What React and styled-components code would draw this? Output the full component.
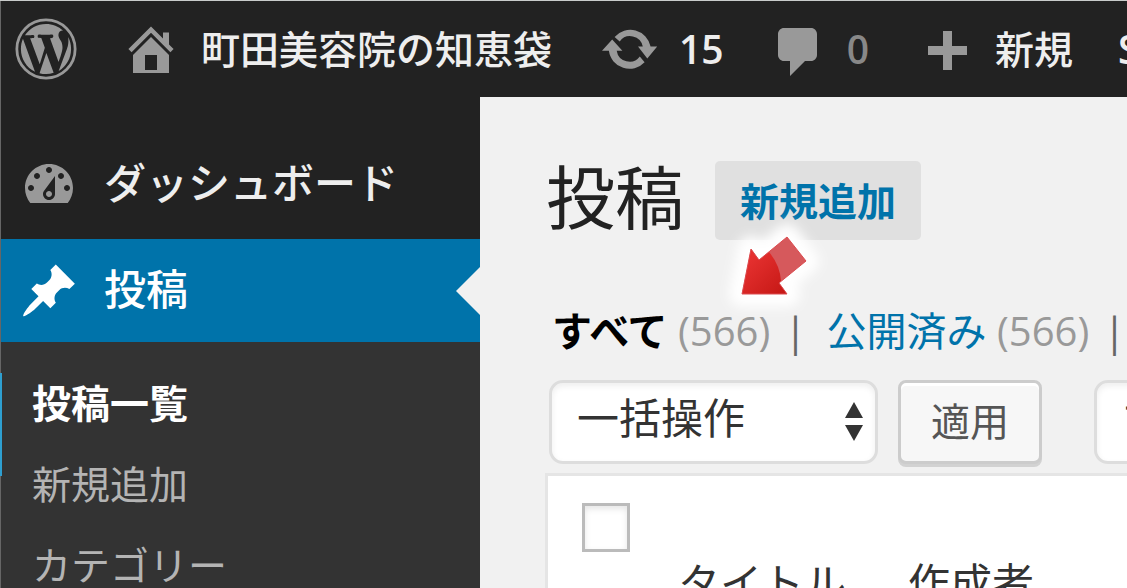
import React, { useState } from "react";
import styled, { createGlobalStyle } from "styled-components";

const colors = {
  bar: "#222222",
  submenu: "#333333",
  blue: "#0073aa",
  page: "#f1f1f1",
  icon: "#999999",
  light: "#eeeeee",
};

const paths = {
  home: "M16 8.5l1.53 1.53-1.06 1.06L10 4.6l-6.47 6.49-1.06-1.06L10 2.5l4 4v-2h2v4zm-6-2.46l6 5.99V18H4v-5.97zM12 17v-5H8v5h4z",
  update:
    "M5.2 6A6.9 6.9 0 0 1 17.2 9.2H19.4L16.1 13.2L13 9.2H14.6A4.3 4.3 0 0 0 6.9 7.5ZM15.2 14.4A6.9 6.9 0 0 1 3.3 10.6H1L4.4 6.8L7.8 10.6H5.9A4.3 4.3 0 0 0 13.6 12.5Z",
  comment:
    "M5 3h9c1.1 0 2 .9 2 2v7c0 1.1-.9 2-2 2h-2l-5 5v-5H5c-1.1 0-2-.9-2-2V5c0-1.1.9-2 2-2z",
  plus: "M17 9v3h-5v5H9v-5H4V9h5V4h3v5h5z",
  dashboard:
    "M3.76 16h12.48c1.1-1.37 1.76-3.11 1.76-5 0-4.42-3.58-8-8-8s-8 3.58-8 8c0 1.89.66 3.63 1.76 5zM10 4c.55 0 1 .45 1 1s-.45 1-1 1-1-.45-1-1 .45-1 1-1zM6 6c.55 0 1 .45 1 1s-.45 1-1 1-1-.45-1-1 .45-1 1-1zm8 0c.55 0 1 .45 1 1s-.45 1-1 1-1-.45-1-1 .45-1 1-1zm-5.37 5.55L12 7v6c0 1.1-.9 2-2 2s-2-.9-2-2c0-.57.24-1.08.63-1.45zM4 10c.55 0 1 .45 1 1s-.45 1-1 1-1-.45-1-1 .45-1 1-1zm12 0c.55 0 1 .45 1 1s-.45 1-1 1-1-.45-1-1 .45-1 1-1zm-5 3c0-.55-.45-1-1-1s-1 .45-1 1 .45 1 1 1 1-.45 1-1z",
  pin: "M10.44 3.02l1.82-1.82 6.36 6.35-1.83 1.82c-1.05-.68-2.48-.57-3.41.36l-.75.75c-.92.93-1.04 2.35-.35 3.41l-1.83 1.82-2.41-2.41-2.8 2.79c-.42.42-3.38 2.71-3.8 2.29s1.86-3.39 2.28-3.81l2.79-2.79L4.1 9.36l1.83-1.82c1.05.69 2.48.57 3.4-.36l.75-.75c.93-.92 1.05-2.35.36-3.41z",
  wordpress:
    "M7.78 15.37L4.37 6.22c.55-.02 1.17-.08 1.17-.08.5-.06.44-1.13-.06-1.11 0 0-1.45.11-2.37.11-.18 0-.37 0-.58-.01C4.12 2.69 6.87 1.11 10 1.11c2.33 0 4.45.87 6.05 2.34-.68-.11-1.65.39-1.65 1.58 0 .74.45 1.36.9 2.1.35.61.55 1.36.55 2.46 0 1.49-1.4 5-1.4 5l-3.03-8.37c.54-.02.82-.17.82-.17.5-.05.44-1.25-.06-1.22 0 0-1.44.12-2.38.12-.87 0-2.33-.12-2.33-.12-.5-.03-.56 1.2-.06 1.22l.92.08 1.26 3.41zM17.41 10c.24-.64.74-1.87.43-4.25.7 1.29 1.05 2.71 1.05 4.25 0 3.29-1.73 6.24-4.4 7.78.97-2.59 1.94-5.2 2.92-7.78zM6.1 18.09C3.12 16.65 1.11 13.53 1.11 10c0-1.3.23-2.48.72-3.59C3.25 10.3 4.67 14.2 6.1 18.09zM10.13 11.46l2.58 6.98c-.86.29-1.76.45-2.71.45-.79 0-1.57-.11-2.29-.33.81-2.38 1.62-4.74 2.42-7.1z",
};

function Icon({ name }) {
  return (
    <IconSvg viewBox="0 0 20 20" aria-hidden="true">
      <path fillRule="evenodd" d={paths[name]} />
    </IconSvg>
  );
}

function Logo() {
  return (
    <LogoSvg viewBox="0 0 20 20" aria-hidden="true">
      <circle cx="10" cy="10" r="9.4" fill="none" stroke="currentColor" strokeWidth="0.9" />
      <path transform="translate(10 10) scale(0.91) translate(-10 -10)" d={paths.wordpress} />
    </LogoSvg>
  );
}

function Picker({ label, options }) {
  return (
    <PickerBox>
      <Select aria-label={label}>
        {options.map((option) => (
          <option key={option}>{option}</option>
        ))}
      </Select>
      <PickerArrows viewBox="0 0 18 40" aria-hidden="true">
        <path d="M9 0l9 16H0zM0 23h18L9 39z" />
      </PickerArrows>
    </PickerBox>
  );
}

export default function App() {
  const [checked, setChecked] = useState(false);

  return (
    <Frame>
      <GlobalStyle />
      <AdminBar>
        <BarLink href="#wordpress" aria-label="WordPress">
          <Logo />
        </BarLink>
        <BarLink href="#site" $left={44}>
          <Icon name="home" />
          <BarText $left={20}>町田美容院の知恵袋</BarText>
        </BarLink>
        <BarLink href="#updates" $left={47}>
          <Icon name="update" />
          <BarText $left={20} $number>
            15
          </BarText>
        </BarLink>
        <BarLink href="#comments" $left={45}>
          <Icon name="comment" />
          <BarText $left={18} $number $dim>
            0
          </BarText>
        </BarLink>
        <BarLink href="#new" $left={47}>
          <Icon name="plus" />
          <BarText $left={19}>新規</BarText>
        </BarLink>
        <BarLink href="#seo" $left={45}>
          <BarText $number>SEO</BarText>
        </BarLink>
      </AdminBar>

      <Body>
        <Sidebar>
          <MenuLink href="#dashboard">
            <Icon name="dashboard" />
            <MenuText>ダッシュボード</MenuText>
          </MenuLink>
          <MenuLink href="#posts" $current>
            <Icon name="pin" />
            <MenuText>投稿</MenuText>
          </MenuLink>
          <Submenu>
            <SubLink href="#all" $current>
              投稿一覧
            </SubLink>
            <SubLink href="#add">新規追加</SubLink>
            <SubLink href="#categories">カテゴリー</SubLink>
          </Submenu>
        </Sidebar>

        <Main>
          <Heading>
            <Title>投稿</Title>
            <AddBox>
              <AddLink href="#add">新規追加</AddLink>
              <Pointer viewBox="0 0 100 80" aria-hidden="true">
                <defs>
                  <linearGradient id="red" x1="0" y1="0" x2="1" y2="1">
                    <stop offset="0.2" stopColor="#e5302f" />
                    <stop offset="1" stopColor="#c41714" />
                  </linearGradient>
                  <filter id="glow" x="-60%" y="-60%" width="220%" height="220%">
                    <feGaussianBlur stdDeviation="6" />
                  </filter>
                </defs>
                <path
                  d="M27 67L36 22L44 33L72 10L91 34L64 56L72 67Z"
                  fill="#ffffff"
                  stroke="#ffffff"
                  strokeWidth="26"
                  strokeLinejoin="round"
                  filter="url(#glow)"
                />
                <path d="M27 67L36 22L44 33L72 10L91 34L64 56L72 67Z" fill="#d6595c" />
                <path d="M27 67L36 22L44 33L54 25Q65 38 66 54L64 56L72 67Z" fill="url(#red)" />
                <path
                  d="M27 67L36 22L44 33L72 10L91 34L64 56L72 67Z"
                  fill="none"
                  stroke="#dc4c50"
                  strokeWidth="1"
                />
              </Pointer>
            </AddBox>
          </Heading>

          <Views>
            <li>
              <ViewLink href="#all" $current>
                すべて
              </ViewLink>{" "}
              <Count>(566)</Count> |
            </li>
            <li>
              <ViewLink href="#published">公開済み</ViewLink> <Count>(566)</Count> |
            </li>
          </Views>

          <Toolbar>
            <Picker label="一括操作を選択" options={["一括操作", "編集"]} />
            <ApplyButton type="button">適用</ApplyButton>
            <Picker label="日付で絞り込む" options={["すべての日付"]} />
          </Toolbar>

          <PostTable>
            <thead>
              <tr>
                <CheckCell>
                  <Checkbox
                    type="checkbox"
                    aria-label="すべて選択"
                    checked={checked}
                    onChange={(e) => setChecked(e.target.checked)}
                  />
                </CheckCell>
                <HeadCell>タイトル</HeadCell>
                <HeadCell>作成者</HeadCell>
              </tr>
            </thead>
          </PostTable>
        </Main>
      </Body>
    </Frame>
  );
}

const GlobalStyle = createGlobalStyle`
  * {
    box-sizing: border-box;
  }

  body {
    margin: 0;
    font-family: "Open Sans", "Noto Sans CJK JP", sans-serif;
    font-size: 39px;
    background: ${colors.page};
  }

  a {
    text-decoration: none;
  }

  button,
  select {
    font-family: inherit;
  }
`;

const Frame = styled.div`
  display: flex;
  flex-direction: column;
  height: 100vh;
  overflow: hidden;
  border-top: 1px solid #c9cccb;
`;

const IconSvg = styled.svg`
  width: 60px;
  height: 60px;
  flex: none;
  fill: currentColor;
`;

const LogoSvg = styled(IconSvg)`
  width: 62px;
  height: 62px;
`;

const AdminBar = styled.nav`
  display: flex;
  align-items: center;
  flex: none;
  height: 96px;
  padding-left: 14px;
  background: ${colors.bar};
  border-left: 1px solid #666666;
  overflow: hidden;
`;

const BarLink = styled.a`
  display: flex;
  align-items: center;
  flex: none;
  margin-left: ${(props) => props.$left || 0}px;
  color: ${colors.icon};
`;

const BarText = styled.span`
  margin-left: ${(props) => props.$left || 0}px;
  line-height: 60px;
  font-weight: ${(props) => (props.$number ? 600 : 500)};
  white-space: nowrap;
  color: ${(props) => (props.$dim ? "#888888" : colors.light)};
`;

const Body = styled.div`
  display: flex;
  flex: 1;
  min-height: 0;
`;

const Sidebar = styled.nav`
  display: flex;
  flex-direction: column;
  flex: none;
  width: 480px;
  padding-top: 36px;
  background: ${colors.bar};
  border-left: 1px solid #666666;
`;

const MenuLink = styled.a`
  position: relative;
  display: flex;
  align-items: center;
  flex: none;
  gap: 25px;
  height: 103px;
  margin-top: ${(props) => (props.$current ? 3 : 0)}px;
  padding-left: 18px;
  font-size: 42px;
  font-weight: 500;
  color: ${(props) => (props.$current ? "#ffffff" : colors.light)};
  background: ${(props) => (props.$current ? colors.blue : "transparent")};

  svg {
    color: ${(props) => (props.$current ? "#ffffff" : colors.icon)};
  }

  &::after {
    content: "";
    display: ${(props) => (props.$current ? "block" : "none")};
    position: absolute;
    right: 0;
    top: 28px;
    border: 24px solid transparent;
    border-left: none;
    border-right-color: ${colors.page};
  }
`;

const MenuText = styled.span`
  padding-bottom: 8px;
`;

const Submenu = styled.div`
  position: relative;
  display: flex;
  flex-direction: column;
  flex: 1;
  padding: 20px 0 0 31px;
  background: ${colors.submenu};

  &::before {
    content: "";
    position: absolute;
    left: -1px;
    top: 31px;
    width: 2px;
    height: 103px;
    background: #2e9fd0;
  }
`;

const SubLink = styled.a`
  flex: none;
  line-height: 81px;
  font-weight: ${(props) => (props.$current ? 700 : 400)};
  color: ${(props) => (props.$current ? "#ffffff" : "#b4b4b4")};
`;

const Main = styled.main`
  flex: 1;
  min-width: 0;
  overflow: hidden;
  padding: 64px 0 0 65px;
  background: ${colors.page};
`;

const Heading = styled.div`
  display: flex;
  align-items: center;
  gap: 31px;
  height: 79px;
  padding-left: 1px;
`;

const Title = styled.h1`
  margin: 0;
  padding-bottom: 6px;
  font-size: 69px;
  font-weight: 400;
  line-height: 79px;
  color: #222222;
`;

const AddBox = styled.div`
  position: relative;
`;

const AddLink = styled.a`
  display: block;
  position: relative;
  padding: 0 25px;
  line-height: 79px;
  font-weight: 700;
  color: ${colors.blue};
  background: #e0e0e0;
  border-radius: 5px;
`;

const Pointer = styled.svg`
  position: absolute;
  left: 0;
  top: 66px;
  width: 100px;
  height: 80px;
  overflow: visible;
  pointer-events: none;
`;

const Views = styled.ul`
  position: relative;
  display: flex;
  gap: 20px;
  margin: 61px 0 0;
  padding: 0 0 0 7px;
  list-style: none;
  font-size: 40px;
  line-height: 60px;
  white-space: nowrap;
  color: #666666;
`;

const ViewLink = styled.a`
  font-weight: ${(props) => (props.$current ? 700 : 400)};
  color: ${(props) => (props.$current ? "#000000" : colors.blue)};
`;

const Count = styled.span`
  margin-right: 4px;
  color: #999999;
`;

const Toolbar = styled.div`
  display: flex;
  align-items: flex-start;
  margin-top: 19px;
  padding-left: 4px;
`;

const PickerBox = styled.div`
  position: relative;
  flex: none;
`;

const Select = styled.select`
  appearance: none;
  display: block;
  height: 84px;
  padding: 0 129px 9px 25px;
  font-size: 42px;
  color: #333333;
  background: #ffffff;
  border: 3px solid #dddddd;
  border-radius: 14px;
  box-shadow: inset 0 3px 6px rgba(0, 0, 0, 0.07);
`;

const PickerArrows = styled.svg`
  position: absolute;
  right: 15px;
  top: 22px;
  width: 18px;
  height: 40px;
  fill: #333333;
  pointer-events: none;
`;

const ApplyButton = styled.button`
  flex: none;
  height: 84px;
  margin: 0 52px 0 20px;
  padding: 0 30px 6px;
  font-size: 39px;
  color: #555555;
  background: #f7f7f7;
  border: 3px solid #cccccc;
  border-radius: 8px;
  box-shadow: inset 0 3px 0 #ffffff, 0 3px 0 #d2d2d2;
`;

const PostTable = styled.table`
  width: 100%;
  height: 200px;
  margin-top: 9px;
  border: 3px solid #e5e5e5;
  border-right: none;
  border-spacing: 0;
  background: #ffffff;
`;

const CheckCell = styled.td`
  width: 130px;
  padding: 27px 0 0 34px;
  vertical-align: top;
`;

const Checkbox = styled.input`
  appearance: none;
  display: block;
  width: 48px;
  height: 49px;
  margin: 0;
  background: #ffffff;
  border: 3px solid #bbbbbb;
  box-shadow: inset 0 3px 6px rgba(0, 0, 0, 0.1);

  &:checked {
    background: ${colors.blue};
  }
`;

const HeadCell = styled.th`
  width: 230px;
  padding: 77px 0 0;
  vertical-align: top;
  text-align: left;
  font-size: 42px;
  font-weight: 400;
  line-height: 60px;
  white-space: nowrap;
  color: #333333;

  &:last-child {
    width: auto;
  }
`;
